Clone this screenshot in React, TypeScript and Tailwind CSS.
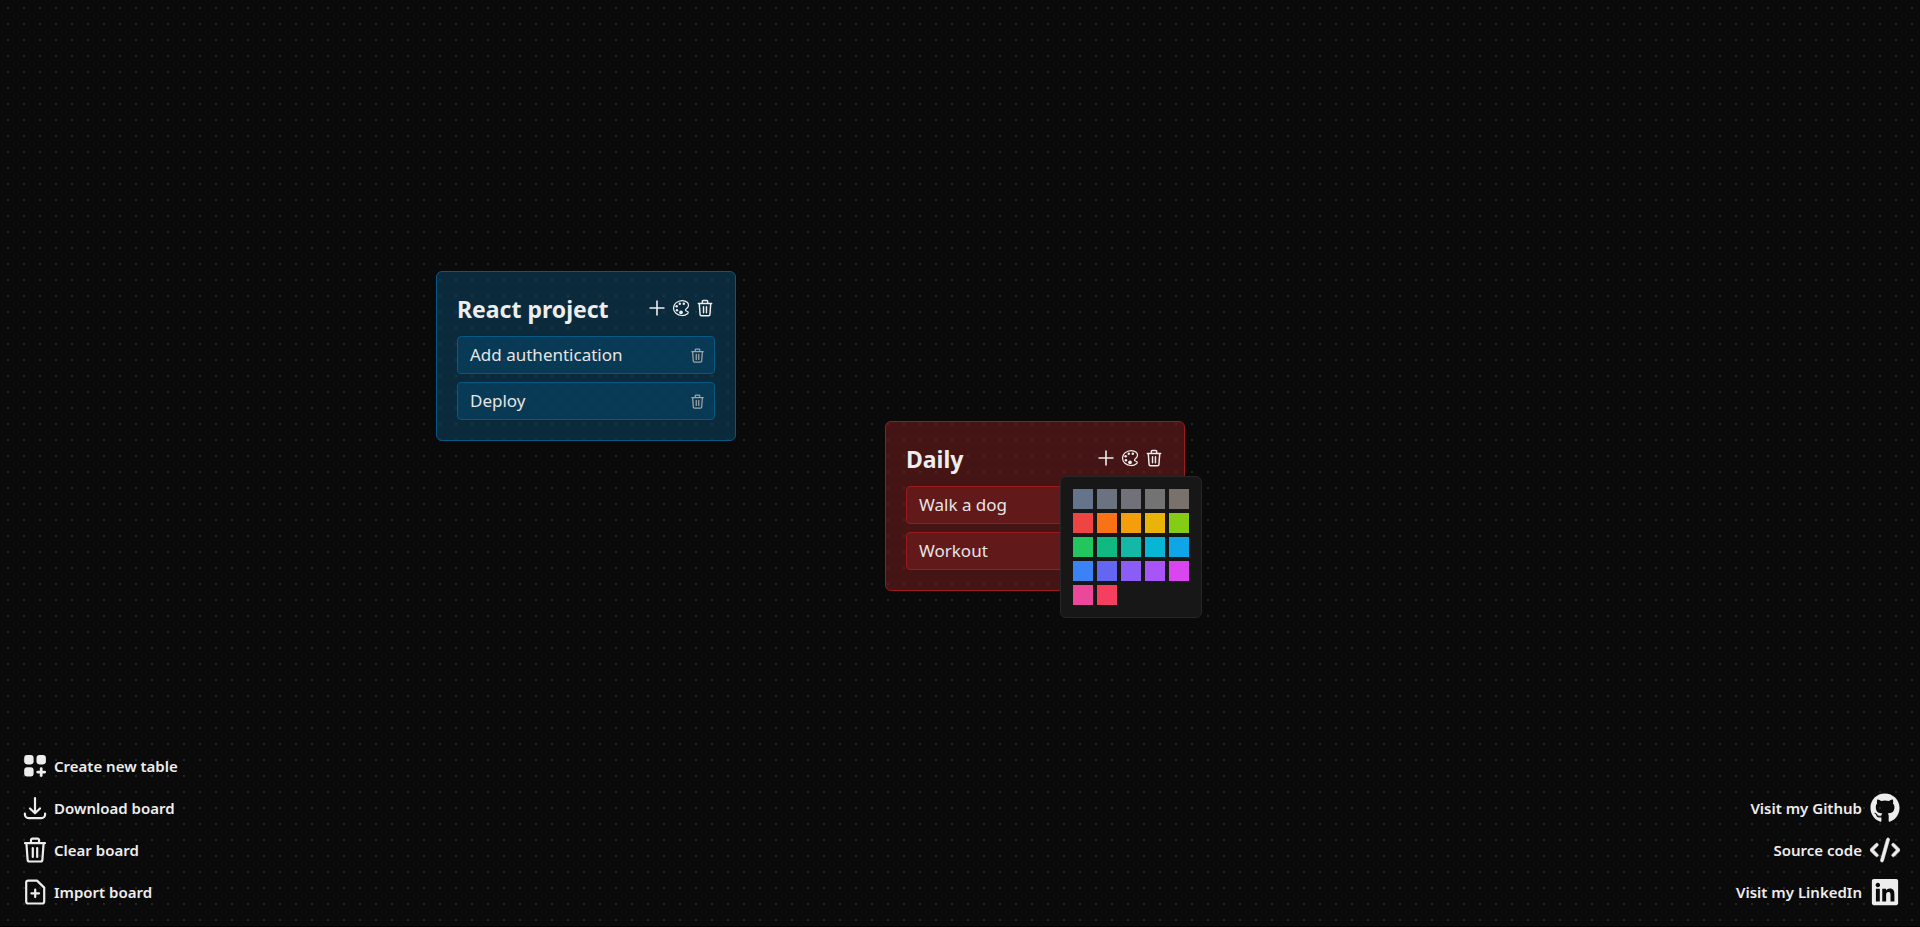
import { useState } from 'react';
import type { ReactNode } from 'react';
import { IoColorPaletteOutline } from 'react-icons/io5';
import { FaCode, FaGithub, FaLinkedin } from 'react-icons/fa6';

type IconProps = { className?: string };

function TableAddIcon({ className }: IconProps) {
  return (
    <svg viewBox="0 1 30 30" fill="currentColor" className={className} aria-hidden="true">
      <rect x="4.2" y="5" width="9.4" height="9.4" rx="3" />
      <rect x="16.5" y="5" width="9.4" height="9.4" rx="3" />
      <rect x="4.2" y="17.2" width="9.4" height="9.4" rx="3" />
      <path d="M21.2 18.6v7M17.7 22.1h7" fill="none" stroke="currentColor" strokeWidth="2.8" strokeLinecap="round" />
    </svg>
  );
}

function TrashIcon({ className }: IconProps) {
  return (
    <svg viewBox="0 1 30 30" fill="none" stroke="currentColor" strokeWidth="2.2" strokeLinecap="round" strokeLinejoin="round" className={className} aria-hidden="true">
      <path d="M5 9.2h20M6.4 9.2l1.2 16.4a2 2 0 0 0 2 1.900h10.800a2 2 0 0 0 2-1.900L23.600 9.200M11 9V6a1.400 1.400 0 0 1 1.400-1.400h5.200A1.400 1.400 0 0 1 19 6v3M12.800 14v9M17.200 14v9" />
    </svg>
  );
}

function PlusIcon({ className }: IconProps) {
  return (
    <svg viewBox="0 0 20 20" fill="none" stroke="currentColor" strokeWidth="1.6" className={className} aria-hidden="true">
      <path d="M10 2.5v15M2.5 10h15" />
    </svg>
  );
}

function DownloadIcon({ className }: IconProps) {
  return (
    <svg viewBox="0 0 30 30" fill="none" stroke="currentColor" strokeWidth="2.2" strokeLinecap="round" strokeLinejoin="round" className={className} aria-hidden="true">
      <path d="M15 5v15.200M10 15.500l5 4.800 5-4.800M4.900 20.500v1a3.600 3.600 0 0 0 3.600 3.600h13a3.600 3.600 0 0 0 3.600-3.600v-1" />
    </svg>
  );
}

function ImportIcon({ className }: IconProps) {
  return (
    <svg viewBox="0 1 30 30" fill="none" stroke="currentColor" strokeWidth="2.2" strokeLinecap="round" strokeLinejoin="round" className={className} aria-hidden="true">
      <path d="M8.200 4.600h8.800l7.200 7v13.900a2 2 0 0 1-2 2h-14a2 2 0 0 1-2-2V6.600a2 2 0 0 1 2-2zM15.200 13.500v7.600M11.400 17.300h7.600" />
    </svg>
  );
}

const swatches = [
  'bg-[#64748b]', 'bg-[#6b7280]', 'bg-[#71717a]', 'bg-[#737373]', 'bg-[#78716c]',
  'bg-[#ef4444]', 'bg-[#f97316]', 'bg-[#f59e0b]', 'bg-[#eab308]', 'bg-[#84cc16]',
  'bg-[#22c55e]', 'bg-[#10b981]', 'bg-[#14b8a6]', 'bg-[#06b6d4]', 'bg-[#0ea5e9]',
  'bg-[#3b82f6]', 'bg-[#6366f1]', 'bg-[#8b5cf6]', 'bg-[#a855f7]', 'bg-[#d946ef]',
  'bg-[#ec4899]', 'bg-[#f43f5e]',
];

function ColorPicker() {
  return (
    <div className="absolute top-[54px] left-[174px] rounded-md border border-[#262626] bg-[#171717] p-3">
      <div className="grid w-max grid-cols-[repeat(5,20px)] gap-1">
        {swatches.map((color) => (
          <button key={color} type="button" aria-label="Pick colour" className={`size-5 cursor-pointer ${color}`} />
        ))}
      </div>
    </div>
  );
}

type TableProps = {
  title: string;
  tasks: string[];
  place: string;
  tone: string;
  taskTone: string;
  pickerOpen?: boolean;
};

function TableCard({ title, tasks, place, tone, taskTone, pickerOpen = false }: TableProps) {
  const [open, setOpen] = useState(pickerOpen);
  return (
    <section className={`absolute w-[300px] rounded-md border p-5 ${place} ${tone}`}>
      <header className="flex h-[34px] items-center justify-between">
        <h2 className="text-[23px] leading-8 font-bold">{title}</h2>
        <div className="flex items-center gap-1 pb-0.5">
          <button type="button" aria-label="Add task"><PlusIcon className="size-5" /></button>
          <button type="button" aria-label="Change colour" onClick={() => setOpen(!open)}>
            <IoColorPaletteOutline className="size-5" />
          </button>
          <button type="button" aria-label="Delete table"><TrashIcon className="size-5" /></button>
        </div>
      </header>
      <ul className="mt-[10px] flex flex-col gap-2">
        {tasks.map((task) => (
          <li key={task} className={`flex h-[38px] items-center justify-between rounded-sm border pr-2 pl-3 ${taskTone}`}>
            <span className="text-[17px] text-[#e5e5e5]">{task}</span>
            <button type="button" aria-label="Delete task" className="text-[#a3a3a3]"><TrashIcon className="size-[17px]" /></button>
          </li>
        ))}
      </ul>
      {open && <ColorPicker />}
    </section>
  );
}

function Action({ label, children }: { label: string; children: ReactNode }) {
  return (
    <button type="button" className="flex h-[30px] cursor-pointer items-center gap-1">
      {children}
      {label}
    </button>
  );
}

function SiteLink({ label, children }: { label: string; children: ReactNode }) {
  return (
    <a href="#" className="flex h-[30px] items-center gap-2">
      {label}
      {children}
    </a>
  );
}

export default function App() {
  return (
    <main className="relative flex min-h-screen items-end justify-between overflow-hidden border-b border-black bg-[#0a0a0a] bg-[url('data:image/svg+xml,%3Csvg%20xmlns=%22http://www.w3.org/2000/svg%22%20width=%2216%22%20height=%2216%22%3E%3Crect%20x=%227%22%20y=%227%22%20width=%222%22%20height=%222%22%20fill=%22%23262626%22/%3E%3C/svg%3E')] px-5 pb-[19px] font-['Noto_Sans',sans-serif] text-[#ededed]">
      <TableCard
        title="React project"
        tasks={['Add authentication', 'Deploy']}
        place="top-[271px] left-[436px]"
        tone="border-[#075985] bg-[#0c4a6e]/50"
        taskTone="border-[#075985] bg-[#075985]/35"
      />
      <TableCard
        title="Daily"
        tasks={['Walk a dog', 'Workout']}
        place="top-[421px] left-[885px]"
        tone="border-[#991b1b] bg-[#7f1d1d]/50"
        taskTone="border-[#991b1b] bg-[#7f1d1d]/50"
        pickerOpen
      />
      <nav className="flex flex-col items-start gap-3 text-[15px] font-semibold" aria-label="Board">
        <Action label="Create new table"><TableAddIcon className="size-[30px]" /></Action>
        <Action label="Download board"><DownloadIcon className="size-[30px]" /></Action>
        <Action label="Clear board"><TrashIcon className="size-[30px]" /></Action>
        <Action label="Import board"><ImportIcon className="size-[30px]" /></Action>
      </nav>
      <nav className="flex flex-col items-end gap-3 text-[15px] font-semibold" aria-label="Links">
        <SiteLink label="Visit my Github"><FaGithub className="size-[30px]" /></SiteLink>
        <SiteLink label="Source code"><FaCode className="size-[30px] stroke-current [stroke-width:14]" /></SiteLink>
        <SiteLink label="Visit my LinkedIn"><FaLinkedin className="size-[30px]" /></SiteLink>
      </nav>
    </main>
  );
}
